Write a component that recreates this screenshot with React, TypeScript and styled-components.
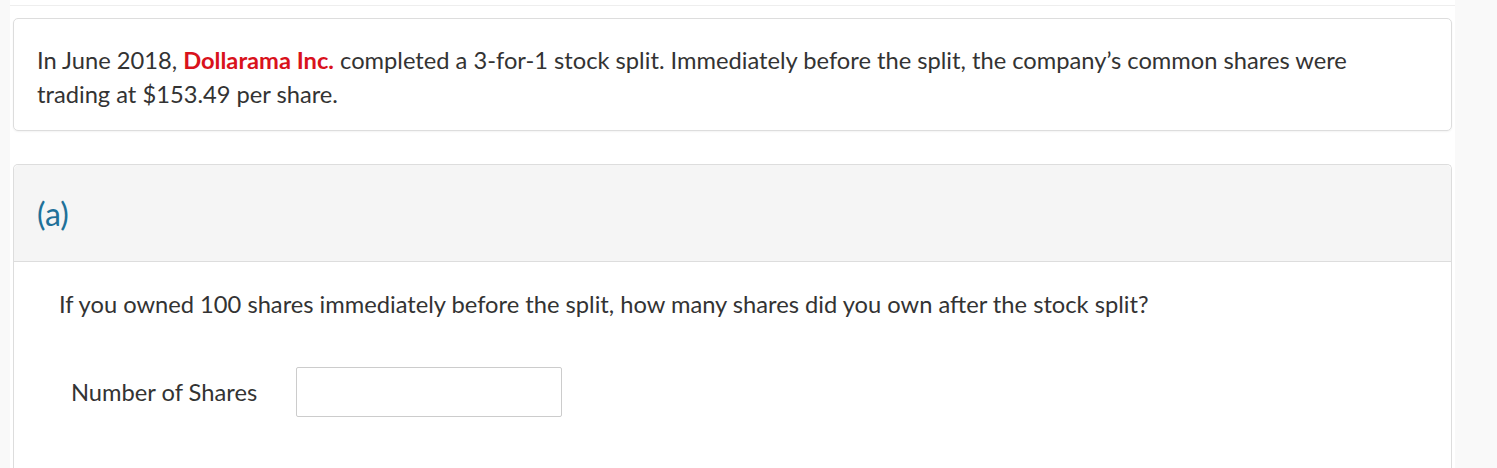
import React from 'react'
import styled, { createGlobalStyle } from 'styled-components'

const GlobalStyle = createGlobalStyle`
  html, body {
    margin: 0;
    padding: 0;
    background: #f9f9f9;
    font-family: Lato, "Open Sans", sans-serif;
    color: #333;
  }
`

const App = () => (
  <>
    <GlobalStyle />
    <Page>
      <Rule />
      <Intro>
        <IntroText>
          In June 2018, <Company>Dollarama Inc.</Company> completed a 3-for-1
          stock split. Immediately before the split, the company’s common
          shares were trading at $153.49 per share.
        </IntroText>
      </Intro>
      <Part>
        <PartHeader>
          <PartLabel>(a)</PartLabel>
        </PartHeader>
        <PartBody>
          <Question>
            If you owned 100 shares immediately before the split, how many
            shares did you own after the stock split?
          </Question>
          <AnswerRow>
            <AnswerLabel htmlFor="shares">Number of Shares</AnswerLabel>
            <AnswerInput id="shares" type="text" />
          </AnswerRow>
        </PartBody>
      </Part>
    </Page>
  </>
)

export default App

const Page = styled.main`
  margin-left: 10px;
  width: 1445px;
  min-height: 468px;
  background: #fff;
  padding-top: 5px;
  box-sizing: border-box;
`

const Rule = styled.hr`
  margin: 0 0 12px 0;
  border: 0;
  border-top: 1px solid #eee;
`

const Intro = styled.section`
  margin: 0 3px;
  padding: 24px 23px 19px 23px;
  border: 1px solid #ddd;
  border-radius: 5px;
  box-shadow: 0 1px 2px rgba(0, 0, 0, 0.05);
`

const IntroText = styled.p`
  margin: 0;
  font-size: 23.7px;
  line-height: 34px;
  max-width: 1340px;
`

const Company = styled.strong`
  color: #d9121c;
  font-weight: 700;
`

const Part = styled.section`
  margin: 33px 3px 0 3px;
  border: 1px solid #ddd;
  border-bottom: 0;
  border-radius: 5px 5px 0 0;
`

const PartHeader = styled.header`
  display: flex;
  align-items: center;
  height: 96px;
  padding: 0 23px;
  background: #f5f5f5;
  border-bottom: 1px solid #ddd;
  border-radius: 5px 5px 0 0;
`

const PartLabel = styled.h3`
  margin: 0;
  font-size: 32px;
  font-weight: 400;
  color: #1f7199;
`

const PartBody = styled.div`
  padding: 25px 45px 60px 45px;
`

const Question = styled.p`
  margin: 0;
  font-size: 23.7px;
  line-height: 34px;
`

const AnswerRow = styled.div`
  display: flex;
  align-items: center;
  gap: 39px;
  margin-top: 46px;
  padding-left: 12px;
`

const AnswerLabel = styled.label`
  font-size: 23.7px;
  color: #333;
`

const AnswerInput = styled.input`
  width: 266px;
  height: 50px;
  box-sizing: border-box;
  border: 1px solid #ccc;
  border-radius: 2px;
  font: inherit;
  font-size: 21px;
  padding: 0 10px;
  outline: none;
`
